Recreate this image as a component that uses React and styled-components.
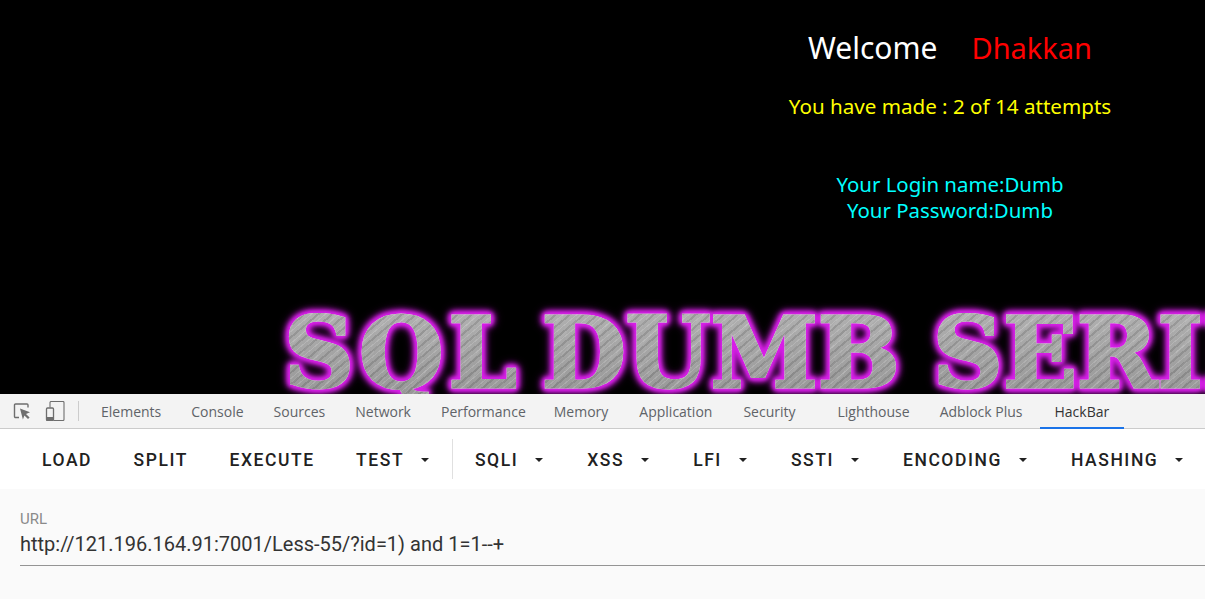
import React from "react";
import styled, { createGlobalStyle } from "styled-components";

const GlobalStyle = createGlobalStyle`
  html, body {
    margin: 0;
    padding: 0;
    height: 100%;
    overflow: hidden;
    background: #fafafa;
  }
`;

const Page = styled.div`
  width: 1205px;
  height: 599px;
  display: flex;
  flex-direction: column;
  overflow: hidden;
`;

const Viewport = styled.div`
  height: 394px;
  flex: none;
  background: #000;
  overflow: hidden;
`;

const Content = styled.div`
  width: 1900px;
  padding-top: 26px;
  display: flex;
  flex-direction: column;
  align-items: center;
  font-family: "Noto Sans", "Open Sans", sans-serif;
`;

const Welcome = styled.div`
  display: flex;
  align-items: baseline;
  gap: 34px;
  font-size: 30px;
  line-height: 43px;
  color: #fff;
`;

const Name = styled.span`
  font-size: 29px;
  color: #f00;
`;

const Attempts = styled.div`
  margin-top: 23px;
  font-size: 20.6px;
  line-height: 29px;
  color: #ff0;
`;

const Creds = styled.div`
  margin-top: 50px;
  font-size: 20.4px;
  line-height: 26px;
  color: #0ff;
  text-align: center;
`;

const Banner = styled.div`
  align-self: flex-start;
  display: flex;
  margin: 90px 0 0 284px;
  white-space: nowrap;
  font-family: "DejaVu Serif", "Liberation Serif", serif;
  font-weight: 900;
  font-size: 97px;
  line-height: 81px;
  -webkit-text-stroke: 3px transparent;
  color: transparent;
  background:
    repeating-linear-gradient(140deg, rgba(255,255,255,.16) 0 1px, transparent 1px 4px, rgba(0,0,0,.12) 4px 6px, transparent 6px 9px),
    repeating-linear-gradient(132deg, rgba(255,255,255,.08) 0 2px, transparent 2px 13px),
    linear-gradient(#b0b0b0, #989898);
  -webkit-background-clip: text;
  background-clip: text;
  filter: drop-shadow(0 0 .6px rgba(255,255,255,.9)) drop-shadow(0 0 2px #d820e8) drop-shadow(0 0 2px #d820e8) drop-shadow(0 0 2.5px #d820e8) drop-shadow(0 0 3px #c01cd0);
`;

const Word = styled.span`
  letter-spacing: ${p => p.$spacing || 0}px;
  margin-right: ${p => p.$gap || 0}px;
`;

const TabBar = styled.div`
  height: 35px;
  flex: none;
  box-sizing: border-box;
  display: flex;
  align-items: stretch;
  padding-left: 11px;
  background: #f3f3f3;
  border-bottom: 1px solid #cbcbcb;
  font-family: "Open Sans", "Noto Sans", sans-serif;
  font-size: 14px;
`;

const IconSlot = styled.div`
  width: 22px;
  margin-right: ${p => p.$gap}px;
  display: flex;
  align-items: center;
  justify-content: center;
`;

const TabDivider = styled.div`
  width: 1px;
  height: 20px;
  align-self: center;
  margin: 0 7px 0 0;
  background: #ccc;
`;

const Tab = styled.div`
  display: flex;
  align-items: center;
  padding: 2px 15px 0;
  margin-left: ${p => p.$offset || 0}px;
  color: ${p => (p.$active ? "#333" : "#5f6368")};
  border-bottom: 2px solid ${p => (p.$active ? "#1a73e8" : "transparent")};
  margin-bottom: -1px;
`;

const Toolbar = styled.div`
  height: 60px;
  flex: none;
  box-sizing: border-box;
  display: flex;
  align-items: center;
  padding: 2px 0 0 21.25px;
  background: #fff;
`;

const Btn = styled.div`
  flex: none;
  display: flex;
  align-items: center;
  height: 36px;
  padding: 0 20.75px;
  margin-right: ${p => p.$gap || 0}px;
  font-family: Roboto, sans-serif;
  font-weight: 500;
  font-size: 17.5px;
  letter-spacing: 1.56px;
  color: #212121;
  white-space: nowrap;
`;

const Caret = styled.span`
  width: 0;
  height: 0;
  margin-left: 17px;
  border-left: 4.5px solid transparent;
  border-right: 4.5px solid transparent;
  border-top: 4.5px solid #212121;
`;

const ToolDivider = styled.div`
  flex: none;
  width: 1px;
  height: 40px;
  margin: -2px 1.25px 0 2px;
  background: #e0e0e0;
`;

const Form = styled.div`
  flex: 1;
  padding: 21px 0 0 20px;
  background: #fafafa;
`;

const Label = styled.div`
  font-family: Roboto, sans-serif;
  font-size: 15px;
  line-height: 18px;
  color: #8a8a8a;
`;

const Url = styled.div`
  height: 38px;
  box-sizing: border-box;
  border-bottom: 1px solid #949494;
  font-family: Roboto, sans-serif;
  font-size: 20px;
  line-height: 32px;
  color: #333;
  white-space: nowrap;
`;

const InspectIcon = () => (
  <svg width="18" height="18" viewBox="0 0 18 18" fill="none">
    <path d="M6 15.5H2.5a1 1 0 0 1-1-1V3a1 1 0 0 1 1-1H14a1 1 0 0 1 1 1V5.5" stroke="#6e6e6e" strokeWidth="1.4" />
    <path d="M7 6.5l10 3.8-4 1.6 3.6 3.6-1.6 1.6-3.6-3.6-1.5 4z" fill="#6e6e6e" />
  </svg>
);

const DeviceIcon = () => (
  <svg width="20" height="20" viewBox="0 0 20 20" fill="none">
    <path d="M5 6.5V1.5a1 1 0 0 1 1-1H18a1 1 0 0 1 1 1V18.5a1 1 0 0 1-1 1H9" stroke="#6e6e6e" strokeWidth="1.1" />
    <rect x="1.5" y="7" width="7" height="12.5" rx="1" stroke="#6e6e6e" strokeWidth="1.3" />
    <rect x="1.5" y="16" width="7" height="3.5" fill="#6e6e6e" />
  </svg>
);

const tabs = [
  { name: "Elements" },
  { name: "Console" },
  { name: "Sources" },
  { name: "Network" },
  { name: "Performance" },
  { name: "Memory", offset: -2 },
  { name: "Application", offset: 1 },
  { name: "Security", offset: 1 },
  { name: "Lighthouse", offset: 12 },
  { name: "Adblock Plus" },
  { name: "HackBar", offset: 2 },
];

const leftButtons = [
  { name: "LOAD" },
  { name: "SPLIT" },
  { name: "EXECUTE" },
  { name: "TEST", menu: true },
];

const rightButtons = ["SQLI", "XSS", "LFI", "SSTI", "ENCODING", "HASHING"];

export default function App() {
  return (
    <Page>
      <GlobalStyle />
      <Viewport>
        <Content>
          <Welcome>
            <span>Welcome</span>
            <Name>Dhakkan</Name>
          </Welcome>
          <Attempts>You have made : 2 of 14 attempts</Attempts>
          <Creds>
            Your Login name:Dumb
            <br />
            Your Password:Dumb
          </Creds>
          <Banner>
            <Word $spacing={5} $gap={20}>SQL</Word>
            <Word $gap={33}>DUMB</Word>
            <Word>SERIES</Word>
          </Banner>
        </Content>
      </Viewport>
      <TabBar>
        <IconSlot $gap={11}><InspectIcon /></IconSlot>
        <IconSlot $gap={12}><DeviceIcon /></IconSlot>
        <TabDivider />
        {tabs.map(t => (
          <Tab key={t.name} $active={t.name === "HackBar"} $offset={t.offset}>{t.name}</Tab>
        ))}
      </TabBar>
      <Toolbar>
        {leftButtons.map(b => (
          <Btn key={b.name}>{b.name}{b.menu && <Caret />}</Btn>
        ))}
        <ToolDivider />
        {rightButtons.map(name => (
          <Btn key={name} $gap={2.5}>{name}<Caret /></Btn>
        ))}
      </Toolbar>
      <Form>
        <Label>URL</Label>
        <Url>http://121.196.164.91:7001/Less-55/?id=1) and 1=1--+</Url>
      </Form>
    </Page>
  );
}
